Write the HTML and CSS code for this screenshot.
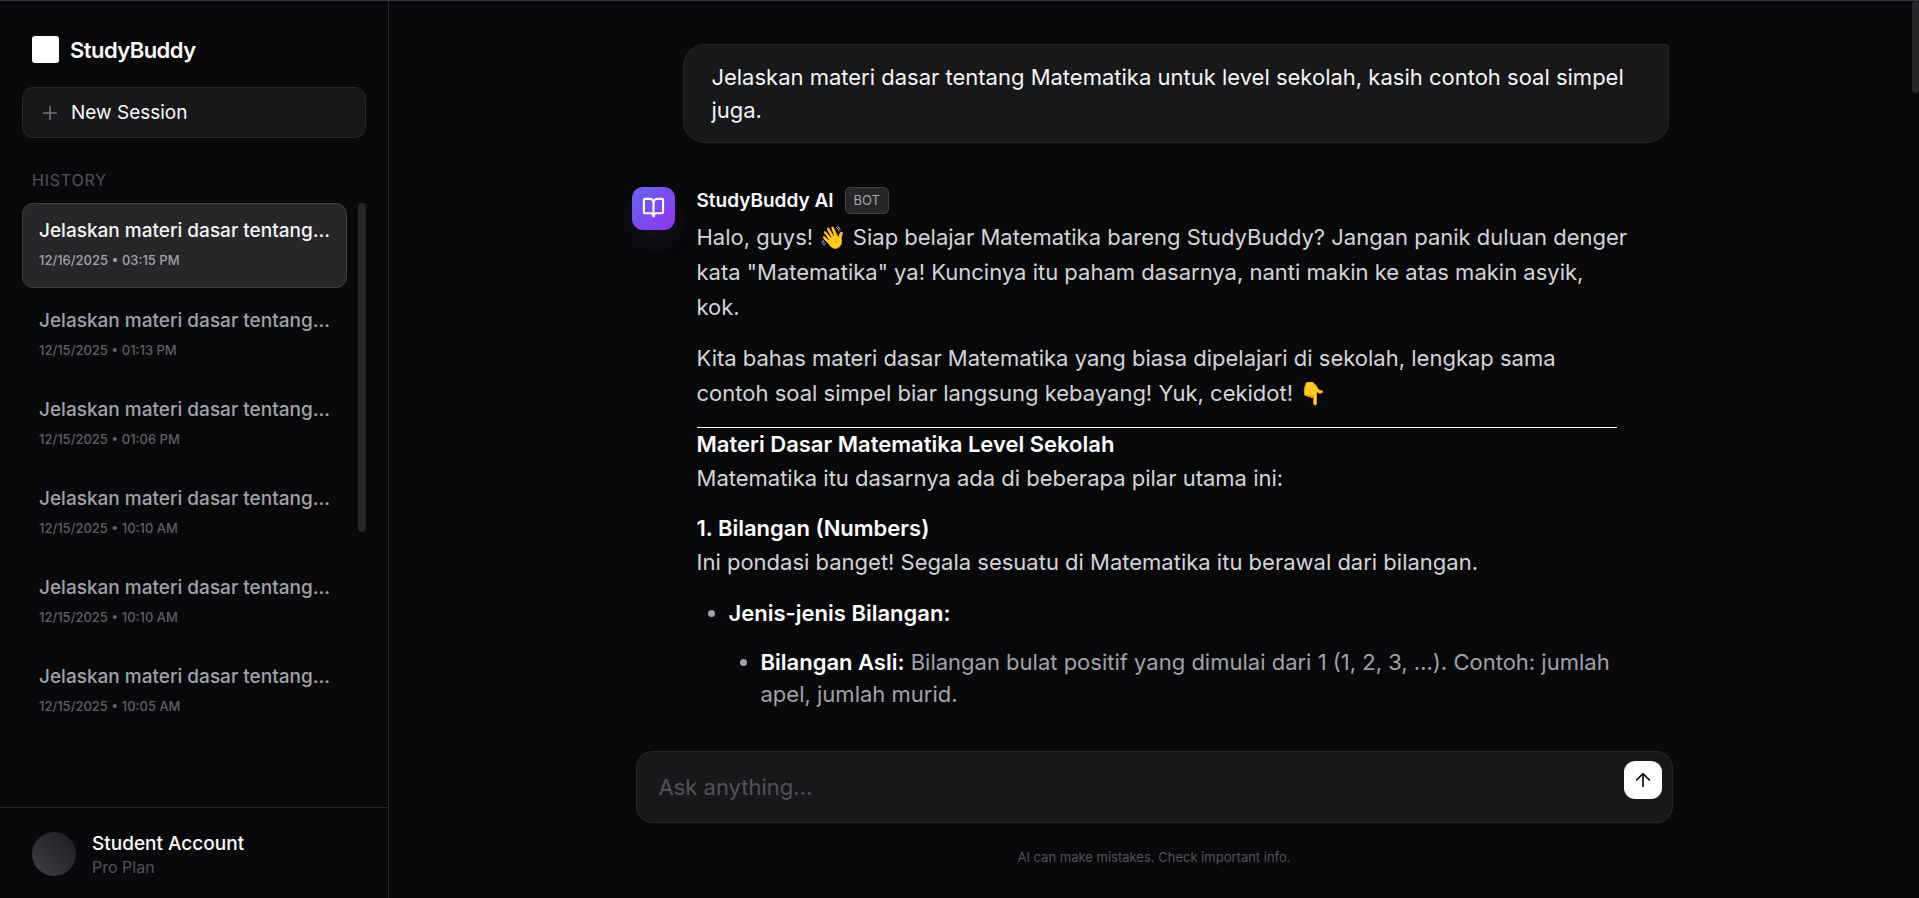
FILE: index.html
```html
<!DOCTYPE html>
<html lang="id">
<head>
    <meta charset="UTF-8">
    <title>StudyBuddy</title>
    <meta name="viewport" content="width=device-width, initial-scale=1.0">
    <link rel="stylesheet" href="styles.css">
</head>
<body>
    <div class="app">
        <aside class="sidebar">
            <div class="sidebar-top">
                <div class="brand">
                    <span class="brand-logo"></span>
                    <span class="brand-name">StudyBuddy</span>
                </div>
                <button class="new-session" type="button">
                    <svg width="22" height="22" viewBox="0 0 24 24" fill="none" stroke="currentColor" stroke-width="1.8" stroke-linecap="round"><path d="M5 12h14M12 5v14"/></svg>
                    New Session
                </button>
                <h2 class="history-label">HISTORY</h2>
                <nav class="history">
                    <button class="history-item active" type="button">
                        <span class="history-title">Jelaskan materi dasar tentang...</span>
                        <span class="history-date">12/16/2025 • 03:15 PM</span>
                    </button>
                    <button class="history-item" type="button">
                        <span class="history-title">Jelaskan materi dasar tentang...</span>
                        <span class="history-date">12/15/2025 • 01:13 PM</span>
                    </button>
                    <button class="history-item" type="button">
                        <span class="history-title">Jelaskan materi dasar tentang...</span>
                        <span class="history-date">12/15/2025 • 01:06 PM</span>
                    </button>
                    <button class="history-item" type="button">
                        <span class="history-title">Jelaskan materi dasar tentang...</span>
                        <span class="history-date">12/15/2025 • 10:10 AM</span>
                    </button>
                    <button class="history-item" type="button">
                        <span class="history-title">Jelaskan materi dasar tentang...</span>
                        <span class="history-date">12/15/2025 • 10:10 AM</span>
                    </button>
                    <button class="history-item" type="button">
                        <span class="history-title">Jelaskan materi dasar tentang...</span>
                        <span class="history-date">12/15/2025 • 10:05 AM</span>
                    </button>
                    <span class="history-thumb"></span>
                </nav>
            </div>
            <div class="account">
                <span class="account-avatar"></span>
                <div class="account-info">
                    <span class="account-name">Student Account</span>
                    <span class="account-plan">Pro Plan</span>
                </div>
            </div>
        </aside>

        <main class="main">
            <section class="chat">
                <div class="thread">
                    <div class="bubble">Jelaskan materi dasar tentang Matematika untuk level sekolah, kasih contoh soal simpel juga.</div>

                    <article class="reply">
                        <span class="bot-avatar">
                            <svg width="23" height="23" viewBox="0 0 24 24" fill="none" stroke="currentColor" stroke-width="2.2" stroke-linecap="round" stroke-linejoin="round"><path d="M12 7v14"/><path d="M3 18a1 1 0 0 1-1-1V4a1 1 0 0 1 1-1h5a4 4 0 0 1 4 4 4 4 0 0 1 4-4h5a1 1 0 0 1 1 1v13a1 1 0 0 1-1 1h-6a3 3 0 0 0-3 3 3 3 0 0 0-3-3z"/></svg>
                        </span>
                        <div class="reply-body">
                            <header class="reply-head">
                                <span class="bot-name">StudyBuddy AI</span>
                                <span class="bot-tag">BOT</span>
                            </header>
                            <p>Halo, guys! 👋 Siap belajar Matematika bareng StudyBuddy? Jangan panik duluan denger kata "Matematika" ya! Kuncinya itu paham dasarnya, nanti makin ke atas makin asyik,<br>kok.</p>
                            <p>Kita bahas materi dasar Matematika yang biasa dipelajari di sekolah, lengkap sama contoh soal simpel biar langsung kebayang! Yuk, cekidot! 👇</p>
                            <hr>
                            <h3>Materi Dasar Matematika Level Sekolah</h3>
                            <p>Matematika itu dasarnya ada di beberapa pilar utama ini:</p>
                            <h3>1. Bilangan (Numbers)</h3>
                            <p>Ini pondasi banget! Segala sesuatu di Matematika itu berawal dari bilangan.</p>
                            <ul>
                                <li>
                                    <strong>Jenis-jenis Bilangan:</strong>
                                    <ul>
                                        <li><strong>Bilangan Asli:</strong> Bilangan bulat positif yang dimulai dari 1 (1, 2, 3, ...). Contoh: jumlah apel, jumlah murid.</li>
                                    </ul>
                                </li>
                            </ul>
                        </div>
                    </article>
                </div>
                <span class="chat-thumb"></span>
            </section>

            <form class="composer">
                <div class="composer-box">
                    <input class="composer-input" type="text" placeholder="Ask anything..." aria-label="Ask anything">
                    <button class="send" type="button" aria-label="Send">
                        <svg width="22" height="22" viewBox="0 0 24 24" fill="none" stroke="currentColor" stroke-width="1.8" stroke-linecap="round" stroke-linejoin="round"><path d="M12 19V5M5 12l7-7 7 7"/></svg>
                    </button>
                </div>
                <p class="disclaimer">AI can make mistakes. Check important info.</p>
            </form>
        </main>
    </div>
</body>
</html>
```
FILE: styles.css
```css
* {
    box-sizing: border-box;
    margin: 0;
    padding: 0;
}
body {
    background: #09090b;
    color: #fafafa;
    font-family: Inter, "Noto Color Emoji", sans-serif;
    font-size: 22px;
}
button, input {
    font: inherit;
    color: inherit;
    border: none;
    background: none;
}
button {
    cursor: pointer;
}
.app {
    display: flex;
    height: 100vh;
    border-top: 1px solid #2a3c44;
}

/* Sidebar */
.sidebar {
    display: flex;
    flex-direction: column;
    flex: 0 0 389px;
    border-right: 1px solid #27272a;
}
.sidebar-top {
    flex: 1;
    min-height: 0;
    padding: 32px 22px 0;
}
.brand {
    display: flex;
    align-items: center;
    gap: 11px;
    height: 33px;
    padding-left: 10px;
}
.brand-logo {
    width: 27px;
    height: 27px;
    border-radius: 3px;
    background: #fff;
}
.brand-name {
    font-weight: 600;
    letter-spacing: -0.025em;
}
.new-session {
    display: flex;
    align-items: center;
    gap: 10px;
    width: 100%;
    height: 51px;
    margin-top: 21px;
    padding: 0 16px;
    border: 1px solid #27272a;
    border-radius: 11px;
    background: #18181b;
    font-size: 19px;
}
.new-session svg {
    color: #71717a;
}
.history-label {
    margin: 30px 0 11px 10px;
    color: #52525b;
    font-size: 16px;
    font-weight: 400;
    line-height: 24px;
    letter-spacing: 0.05em;
}
.history {
    position: relative;
    display: flex;
    flex-direction: column;
    gap: 6px;
    padding-right: 19px;
}
.history-item {
    display: flex;
    flex-direction: column;
    gap: 6px;
    padding: 13px 17px 17px;
    border-radius: 11px;
    text-align: left;
}
.history-item.active {
    padding: 13px 16px 17px;
    border: 1px solid #3f3f46;
    background: #27272a;
}
.history-title {
    color: #a1a1aa;
    font-size: 19px;
    font-weight: 500;
    line-height: 27px;
    white-space: nowrap;
}
.history-date {
    color: #5f5f66;
    font-size: 13px;
    font-weight: 500;
    line-height: 20px;
}
.active .history-title {
    color: #f4f4f5;
}
.active .history-date {
    color: #a1a1aa;
}
.history-thumb {
    position: absolute;
    top: 0;
    right: 0;
    width: 8px;
    height: 329px;
    border-radius: 4px;
    background: #27272a;
}
.account {
    display: flex;
    align-items: center;
    gap: 16px;
    height: 91px;
    padding: 2px 32px 0;
    border-top: 1px solid #27272a;
}
.account-avatar {
    width: 44px;
    height: 44px;
    border-radius: 50%;
    background: linear-gradient(to top right, #3f3f42, #1c1c21);
}
.account-info {
    display: flex;
    flex-direction: column;
}
.account-name {
    font-size: 19px;
    font-weight: 500;
    line-height: 25px;
}
.account-plan {
    color: #52525b;
    font-size: 16px;
    line-height: 22px;
}

/* Chat */
.main {
    display: flex;
    flex-direction: column;
    flex: 1;
    min-width: 0;
}
.chat {
    position: relative;
    flex: 1;
    min-height: 0;
    overflow: hidden;
    padding: 43px 8px 0 0;
}
.thread {
    display: flex;
    flex-direction: column;
    gap: 44px;
    max-width: 1037px;
    margin: 0 auto;
}
.bubble {
    align-self: flex-end;
    max-width: 95%;
    padding: 16px 27px 15px;
    border: 1px solid #27272a;
    border-radius: 22px 3px 22px 22px;
    background: #18181b;
    color: #f4f4f5;
    line-height: 33px;
}
.reply {
    display: flex;
    align-items: flex-start;
    gap: 22px;
    max-width: 95%;
}
.bot-avatar {
    display: flex;
    align-items: center;
    justify-content: center;
    flex: 0 0 43px;
    height: 43px;
    padding-bottom: 3px;
    border-radius: 11px;
    background: linear-gradient(135deg, #6366f1, #9333ea);
    box-shadow: 0 12px 20px rgba(99, 102, 241, 0.1);
}
.reply-body {
    flex: 1;
    min-width: 0;
}
.reply-head {
    display: flex;
    align-items: center;
    gap: 11px;
    margin-bottom: 6px;
}
.bot-name {
    font-size: 19px;
    font-weight: 600;
}
.bot-tag {
    padding: 0 8px;
    border: 1px solid #3f3f46;
    border-radius: 5px;
    background: #27272a;
    color: #a1a1aa;
    font-size: 13px;
    line-height: 25px;
}
/* paragraphs run slightly wider than the rule and the lists */
.reply p {
    margin: 0 -14px 16px 0;
    color: #d4d4d8;
    line-height: 35px;
}
.reply hr {
    border: none;
    border-top: 1px solid #fafafa;
}
.reply h3 {
    color: #fff;
    font-size: 22px;
    font-weight: 600;
    line-height: 33px;
}
.reply ul {
    margin-top: 17px;
    padding-left: 32px;
    color: #a1a1aa;
    line-height: 32px;
}
.reply li {
    list-style: disc;
}
.reply strong {
    color: #fff;
    font-weight: 600;
}
.chat-thumb {
    position: absolute;
    top: 0;
    right: 0;
    width: 7px;
    height: 92px;
    border-radius: 4px;
    background: #27272a;
}

/* Composer */
.composer {
    padding: 11px 0 29px;
}
.composer-box {
    display: flex;
    align-items: flex-start;
    max-width: 1037px;
    margin: 0 auto;
    padding: 9px 10px 9px 22px;
    border: 1px solid #27272a;
    border-radius: 16px;
    background: #18181b;
}
.composer-input {
    flex: 1;
    height: 52px;
    outline: none;
}
.composer-input::placeholder {
    color: #52525b;
}
.send {
    display: flex;
    align-items: center;
    justify-content: center;
    width: 38px;
    height: 38px;
    border-radius: 11px;
    background: #fff;
    color: #09090b;
}
.disclaimer {
    margin-top: 22px;
    color: #52525b;
    font-size: 13px;
    line-height: 24px;
    text-align: center;
}
```
